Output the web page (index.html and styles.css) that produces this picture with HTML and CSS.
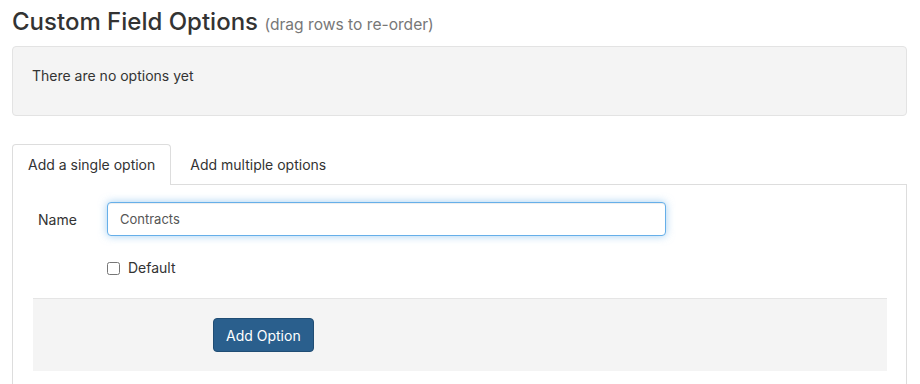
FILE: index.html
```html
<!DOCTYPE HTML>
<html lang='en'>
<head>
<meta charset='utf-8'>
<title>Custom Field Options</title>
<link rel="stylesheet" href="styles.css">
</head>
<body>
<div class='page'>
<h1 class='page_title'>Custom Field Options <small>(drag rows to re-order)</small></h1>
<div class='well'>There are no options yet</div>
<ul class='tabs'>
<li class='tab active'>Add a single option</li>
<li class='tab'>Add multiple options</li>
</ul>
<div class='tab_pane'>
<div class='form_row'>
<label class='form_label' for='name'>Name</label>
<input type='text' id='name' class='text_input' value='Contracts'>
</div>
<div class='check_row'>
<label><input type='checkbox' class='check'> Default</label>
</div>
<div class='form_footer'>
<button type='button' class='btn_primary'>Add Option</button>
</div>
</div>
</div>
</body>
</html>
```

FILE: styles.css
```css
body
{
margin:0;
font-family:Inter,"Liberation Sans",sans-serif;
font-size:14px;
color:#333;
background:#fff;
}
.page
{
padding:0 13px 0 12px;
}
.page_title
{
margin:0;
padding-top:7px;
height:39px;
font-size:24px;
font-weight:500;
line-height:30px;
color:#333;
}
.page_title small
{
font-size:15.6px;
font-weight:400;
color:#777;
}
.well
{
height:70px;
box-sizing:border-box;
padding:19px 19px;
line-height:20px;
background:#f4f4f4;
border:1px solid #e3e3e3;
border-radius:4px;
}
.tabs
{
list-style:none;
margin:28px 0 0 0;
padding:0;
display:flex;
}
.tab
{
height:40px;
box-sizing:border-box;
padding:0 15px;
line-height:40px;
border:1px solid transparent;
border-bottom:none;
border-radius:4px 4px 0 0;
}
.tab.active
{
border-color:#ddd;
background:#fff;
margin-bottom:-1px;
height:41px;
position:relative;
}
.tabs .tab + .tab
{
padding:0 18px;
}
.tab_pane
{
border:1px solid #ddd;
border-bottom:none;
height:200px;
padding:17px 19px 0 20px;
}
.form_row
{
display:flex;
align-items:center;
}
.form_label
{
width:69px;
padding-left:5px;
}
.text_input
{
width:559px;
height:34px;
box-sizing:border-box;
padding:6px 12px;
font-family:Inter,"Liberation Sans",sans-serif;
font-size:13px;
color:#555;
border:1px solid #66afe9;
border-radius:4px;
outline:none;
box-shadow:inset 0 1px 1px rgba(0,0,0,.075),0 0 8px rgba(102,175,233,.6);
}
.check_row
{
padding:22px 0 0 74px;
height:40px;
line-height:20px;
}
.check
{
margin:0 4px 0 0;
width:13px;
height:13px;
vertical-align:-2px;
}
.form_footer
{
height:73px;
box-sizing:border-box;
padding:19px 0 0 180px;
background:#f4f4f4;
border-top:1px solid #e5e5e5;
}
.btn_primary
{
height:34px;
padding:0 12px;
font-family:Inter,"Liberation Sans",sans-serif;
font-size:14px;
color:#fff;
background:#2a5f8d;
border:1px solid #204d74;
border-radius:4px;
}
```
